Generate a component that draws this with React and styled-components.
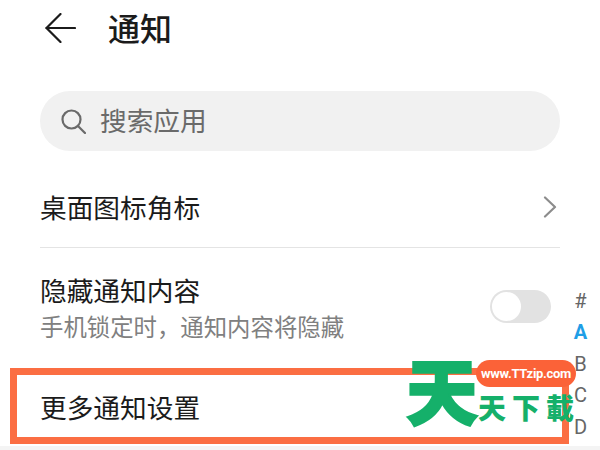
import React from 'react'
import styled, { createGlobalStyle } from 'styled-components'

const Global = createGlobalStyle`
  html, body {
    margin: 0;
    padding: 0;
    background: #fff;
  }
`

const Page = styled.div`
  position: relative;
  width: 600px;
  height: 450px;
  overflow: hidden;
  background: #fff;
  color: #1b1b1b;
  font-family: "Noto Sans CJK SC", "Noto Sans", sans-serif;
`

const Header = styled.header`
  display: flex;
  align-items: center;
  gap: 32px;
  height: 58px;
  padding-left: 45px;
`

const Title = styled.h1`
  margin: 0 0 3px;
  font-size: 32px;
  font-weight: 500;
  line-height: 55px;
`

const Content = styled.div`
  padding: 33px 40px 0;
`

const Search = styled.div`
  display: flex;
  align-items: center;
  gap: 14px;
  height: 60px;
  padding-left: 21px;
  border-radius: 30px;
  background: #f1f1f1;
  color: #6a6a6a;
  font-size: 26.7px;
`

const SearchText = styled.span`
  margin-bottom: 4px;
`

const Row = styled.div`
  box-sizing: border-box;
  display: flex;
  align-items: center;
  justify-content: space-between;
  height: ${p => p.$height}px;
  padding-top: ${p => p.$top}px;
  border-bottom: ${p => (p.$divider ? '1px solid #e4e4e4' : 'none')};
`

const Label = styled.div`
  font-size: 26.7px;
  line-height: 36px;
`

const Sub = styled.div`
  color: #808080;
  font-size: 23.4px;
  line-height: 32px;
  margin-top: 2px;
`

const Toggle = styled.div`
  box-sizing: border-box;
  width: 61px;
  height: 33px;
  margin-right: 9px;
  padding: 2px;
  border-radius: 17px;
  background: #e2e2e2;
`

const Knob = styled.div`
  width: 29px;
  height: 29px;
  border-radius: 50%;
  background: #fff;
`

const IndexBar = styled.div`
  position: absolute;
  top: 286px;
  left: 570px;
  width: 21px;
  display: flex;
  flex-direction: column;
  align-items: center;
  font-family: "Roboto", sans-serif;
  font-size: 20px;
  line-height: 31.4px;
  color: #666;
`

const IndexLetter = styled.span`
  color: ${p => (p.$active ? '#1f9ee6' : 'inherit')};
  font-weight: ${p => (p.$active ? 700 : 400)};
`

const Highlight = styled.div`
  position: absolute;
  left: 10px;
  top: 368px;
  box-sizing: border-box;
  width: 559px;
  height: 76px;
  border: 7px solid #fb6e43;
`

const Footer = styled.div`
  position: absolute;
  left: 0;
  right: 0;
  bottom: 0;
  height: 4px;
  background: #f4f4f4;
`

const Watermark = styled.div`
  position: absolute;
  left: 406px;
  top: 358px;
  display: flex;
  color: #15b06a;
  font-weight: 900;
`

const LogoMark = styled.div`
  width: 72px;
  height: 66px;
  font-size: 72px;
  line-height: 60px;
  text-align: center;
  white-space: nowrap;
  -webkit-text-stroke: 2px #15b06a;
`

const LogoText = styled.div`
  display: flex;
  gap: 6px;
  margin-top: 34px;
  height: 30px;
  font-size: 28px;
  line-height: 30px;
`

const Badge = styled.div`
  position: absolute;
  left: 476px;
  top: 360px;
  width: 100px;
  height: 27px;
  border-radius: 14px;
  background: #fb6238;
  color: #fff;
  font-family: "Roboto", sans-serif;
  font-size: 13px;
  font-weight: 700;
  letter-spacing: -0.3px;
  line-height: 27px;
  text-align: center;
`

function BackIcon() {
  return (
    <svg width="31" height="30" viewBox="0 0 31 30" fill="none" stroke="#1b1b1b" strokeWidth="2.2" strokeLinecap="round" strokeLinejoin="round" style={{ marginBottom: 3 }}>
      <path d="M1.5 15H30" />
      <path d="M15.5 1L1.5 15L15.5 29" />
    </svg>
  )
}

function SearchIcon() {
  return (
    <svg width="25" height="25" viewBox="0 0 25 25" fill="none" stroke="#6a6a6a" strokeWidth="2.2" strokeLinecap="round">
      <circle cx="10.5" cy="10.5" r="9" />
      <path d="M17 17L24 24" />
    </svg>
  )
}

function Chevron() {
  return (
    <svg width="14" height="22" viewBox="0 0 14 22" fill="none" stroke="#8c8c8c" strokeWidth="2.2" strokeLinecap="round" strokeLinejoin="round" style={{ marginRight: 3 }}>
      <path d="M2 1.5L12 11L2 20.5" />
    </svg>
  )
}

export default function App() {
  return (
    <Page>
      <Global />
      <Header>
        <BackIcon />
        <Title>通知</Title>
      </Header>
      <Content>
        <Search>
          <SearchIcon />
          <SearchText>搜索应用</SearchText>
        </Search>
        <Row $height={97} $top={15} $divider>
          <Label>桌面图标角标</Label>
          <Chevron />
        </Row>
        <Row $height={104} $top={13}>
          <div>
            <Label>隐藏通知内容</Label>
            <Sub>手机锁定时，通知内容将隐藏</Sub>
          </div>
          <Toggle>
            <Knob />
          </Toggle>
        </Row>
        <Row $height={78} $top={32}>
          <Label>更多通知设置</Label>
        </Row>
      </Content>
      <IndexBar>
        <span>#</span>
        <IndexLetter $active>A</IndexLetter>
        <span>B</span>
        <span>C</span>
        <span>D</span>
      </IndexBar>
      <Footer />
      <Highlight />
      <Watermark>
        <LogoMark>天</LogoMark>
        <LogoText>
          <span>天</span>
          <span>下</span>
          <span>載</span>
        </LogoText>
      </Watermark>
      <Badge>www.TTzip.com</Badge>
    </Page>
  )
}
